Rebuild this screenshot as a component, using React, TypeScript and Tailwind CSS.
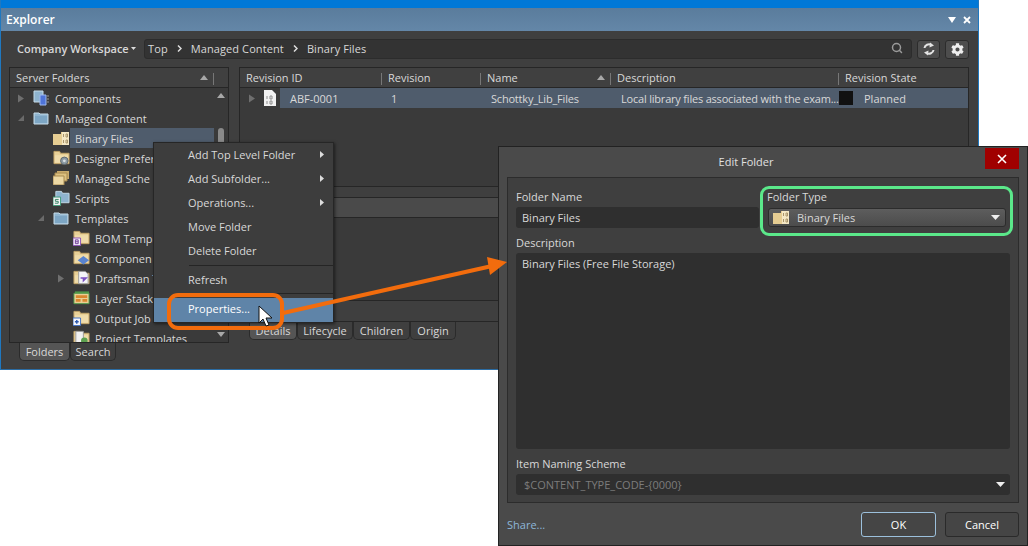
import { Search } from "lucide-react";
import { FaCog } from "react-icons/fa";
import type { ReactNode } from "react";

const Caret = ({ open }: { open?: boolean }) =>
  open ? (
    <svg width="8" height="8" viewBox="0 0 8 8">
      <path d="M7 1v6H1z" fill="#6a6a6a" />
    </svg>
  ) : (
    <svg width="8" height="9" viewBox="0 0 8 9">
      <path d="M1 0.5l6 4-6 4z" fill="#6f6f6f" />
    </svg>
  );

const SortUp = () => (
  <svg width="8" height="5" viewBox="0 0 8 5">
    <path d="M4 0l4 5H0z" fill="#a8a8a8" />
  </svg>
);

const BlueFolder = () => (
  <svg width="16" height="14" viewBox="0 0 16 14">
    <path d="M1 2h5l1 1h8v10H1z" fill="#8fb4cf" stroke="#c5dbe8" strokeWidth="1" />
    <path d="M2 5h12v7H2z" fill="#7da6c4" />
  </svg>
);

const TanFolder = ({ children }: { children?: ReactNode }) => (
  <svg width="18" height="16" viewBox="0 0 18 16">
    <path d="M1 1h6l1 2h9v11H1z" fill="#e9d197" stroke="#c2a468" strokeWidth="1" />
    <path d="M2 5h14v8H2z" fill="#efdcab" />
    {children}
  </svg>
);

const BinaryIcon = () => (
  <svg width="16" height="15" viewBox="0 0 16 15">
    <path d="M0 3h8V1h8v13H0z" fill="#e6cd92" />
    <path d="M9 1h7v13H9z" fill="#f4e7c4" />
    <path d="M10.5 3v3M13 3h1.5v3H13zM10.5 9v3M13 9h1.5v3H13z" fill="none" stroke="#a8946a" strokeWidth="1" />
  </svg>
);

const FileIcon = () => (
  <svg width="12" height="16" viewBox="0 0 12 16">
    <path d="M0 0h8l4 4v12H0z" fill="#f1f1f1" />
    <path d="M3 6v3M6 6h2v3H6zM3 11v3M6 11h2v3H6z" fill="none" stroke="#8d8d8d" strokeWidth="1" />
  </svg>
);

const SyncIcon = () => (
  <svg width="14" height="14" viewBox="0 0 14 14">
    <path d="M2.5 6A4.5 4 0 0 1 9.5 3" fill="none" stroke="#e4e4e4" strokeWidth="2" />
    <path d="M8 0.5L12 3.5 7.5 5.5z" fill="#e4e4e4" />
    <path d="M11.5 8A4.5 4 0 0 1 4.5 11" fill="none" stroke="#e4e4e4" strokeWidth="2" />
    <path d="M6 13.5L2 10.5 6.5 8.5z" fill="#e4e4e4" />
  </svg>
);

const rowIcons: Record<string, ReactNode> = {
  Components: (
    <svg width="16" height="16" viewBox="0 0 16 16">
      <path d="M1 1h9v11H1z" fill="#8fb4cf" stroke="#c5dbe8" />
      <path d="M7 5h6v10H7z" fill="#4f74d8" stroke="#9db8ee" />
      <path d="M14 6h2M14 9h2M14 12h2" stroke="#9a9a9a" />
    </svg>
  ),
  "Managed Content": <BlueFolder />,
  Templates: <BlueFolder />,
  "Binary Files": <BinaryIcon />,
  "Designer Prefer": (
    <TanFolder>
      <circle cx="12" cy="11" r="4" fill="#8c9aa3" stroke="#5d666c" />
      <circle cx="12" cy="11" r="1.5" fill="#d6dde0" />
    </TanFolder>
  ),
  "Managed Sche": (
    <svg width="16" height="14" viewBox="0 0 16 14">
      <path d="M4 0h12v8H4z" fill="#c9ab6d" />
      <path d="M2 2h12v8H2z" fill="#dcc080" stroke="#a88a50" />
      <path d="M0 5h11v9H0z" fill="#ecd8a4" stroke="#a88a50" />
    </svg>
  ),
  Scripts: (
    <svg width="18" height="16" viewBox="0 0 18 16">
      <path d="M3 1h6l1 2h7v10H3z" fill="#8fb4cf" stroke="#c5dbe8" />
      <path d="M0 7h8v9H0z" fill="#f4f4f4" stroke="#3d9a78" />
      <path d="M6 9.5H2.5v2h3v2H2" fill="none" stroke="#2f7f60" />
    </svg>
  ),
  "BOM Templ": (
    <TanFolder>
      <path d="M0 8h8v8H0z" fill="#f3eef7" stroke="#8a50b5" />
      <path d="M2.5 10h3v4h-3zM2.5 12h3" fill="none" stroke="#6d3a96" />
    </TanFolder>
  ),
  Componen: (
    <TanFolder>
      <path d="M11 6l6 4.5-6 4.5-6-4.5z" fill="#5a84cf" />
    </TanFolder>
  ),
  "Draftsman T": (
    <TanFolder>
      <path d="M6 1h7l3 3v10H6z" fill="#f4f4f8" stroke="#9a9a9a" />
      <path d="M8 8h6l-3 3v-3" fill="none" stroke="#7a4fc0" strokeWidth="1.5" />
    </TanFolder>
  ),
  "Layer Stack": (
    <svg width="18" height="16" viewBox="0 0 18 16">
      <path d="M2 1h15v2H2z" fill="#4f9a4a" />
      <path d="M1 3h16v11H1z" fill="#e8cf95" stroke="#4f9a4a" />
      <path d="M3 5h12v3H3zM3 9h5v3H3zM10 9h5v3h-5z" fill="#d9872f" />
    </svg>
  ),
  "Output Job": (
    <TanFolder>
      <path d="M0 8h8v8H0z" fill="#f4f6fb" stroke="#3f6fc4" />
      <path d="M4 10v4M2 12h4" stroke="#2a58b0" strokeWidth="1.5" />
    </TanFolder>
  ),
  "Project Templates": (
    <TanFolder>
      <path d="M3 1h8v13H3z" fill="#f1f1f1" stroke="#9a9a9a" />
      <circle cx="12" cy="11" r="3.5" fill="#5da04f" />
    </TanFolder>
  ),
};

// labels are as far as they show left of the open context menu
const treeRows: { label: string; indent: number; caret?: string; selected?: boolean }[] = [
  { label: "Components", indent: 0, caret: "closed" },
  { label: "Managed Content", indent: 0, caret: "open" },
  { label: "Binary Files", indent: 1, selected: true },
  { label: "Designer Prefer", indent: 1 },
  { label: "Managed Sche", indent: 1 },
  { label: "Scripts", indent: 1 },
  { label: "Templates", indent: 1, caret: "open" },
  { label: "BOM Templ", indent: 2 },
  { label: "Componen", indent: 2 },
  { label: "Draftsman T", indent: 2, caret: "closed" },
  { label: "Layer Stack", indent: 2 },
  { label: "Output Job", indent: 2 },
  { label: "Project Templates", indent: 2 },
];

const menuItems = [
  { label: "Add Top Level Folder", arrow: true },
  { label: "Add Subfolder...", arrow: true },
  { label: "Operations...", arrow: true },
  { label: "Move Folder" },
  { label: "Delete Folder" },
];

function TreeRow({ row }: { row: (typeof treeRows)[number] }) {
  return (
    <div
      className="flex h-5 items-center whitespace-nowrap"
      style={{ paddingLeft: 7 + row.indent * 20 }}
    >
      <span className="flex w-[16px] shrink-0 items-center">
        {row.caret && <Caret open={row.caret === "open"} />}
      </span>
      <span className="flex w-[17px] shrink-0 items-center">{rowIcons[row.label]}</span>
      <span className={`flex h-5 flex-1 items-center pl-[5px] ${row.selected ? "bg-[#4f5c6c]" : ""}`}>
        {row.label}
      </span>
    </div>
  );
}

function ColHead({ label, width, sort }: { label: string; width: number; sort?: boolean }) {
  return (
    <div className="relative flex h-full shrink-0 items-center pl-[6px]" style={{ width }}>
      {label}
      {sort && (
        <span className="ml-auto mr-[6px]">
          <SortUp />
        </span>
      )}
      <span className="absolute right-0 top-[5px] h-[12px] w-px bg-[#777]" />
    </div>
  );
}

function Tab({ label, active, width }: { label: string; active?: boolean; width: number }) {
  return (
    <div
      className={`flex h-[18px] items-center justify-center rounded-b-[5px] border border-t-0 border-[#2b2b2b] ${
        active ? "bg-[#555]" : "bg-[#3f3f3f]"
      }`}
      style={{ width }}
    >
      {label}
    </div>
  );
}

const Chevron = () => (
  <svg width="5" height="7" viewBox="0 0 5 7">
    <path d="M1 0.5l3 3-3 3" fill="none" stroke="#ddd" strokeWidth="1.5" />
  </svg>
);

const DropArrow = () => (
  <svg className="ml-auto" width="9" height="5" viewBox="0 0 9 5">
    <path d="M0 0h9L4.5 5z" fill="#eee" />
  </svg>
);

function Explorer() {
  return (
    <div className="absolute left-0 top-0 flex h-[370px] w-[979px] flex-col border-x border-b border-x-[#1f78c0] border-b-[#2b6ca3] bg-[#3f3f3f]">
      <div className="h-2 shrink-0 bg-[#0078d7]" />
      <div className="flex h-[23px] shrink-0 items-center justify-between bg-gradient-to-b from-[#5a7c9c] to-[#6487a8] pl-[5px] pr-[7px] text-[12px] font-semibold text-white">
        Explorer
        <span className="flex items-center gap-[7px]">
          <svg width="8" height="6" viewBox="0 0 8 6">
            <path d="M0 0h8L4 6z" fill="#fff" />
          </svg>
          <svg width="8" height="8" viewBox="0 0 8 8">
            <path d="M1 1l6 6M7 1L1 7" stroke="#fff" strokeWidth="1.8" />
          </svg>
        </span>
      </div>

      <div className="mt-[8px] flex h-5 shrink-0 items-center pl-[16px] pr-[9px]">
        <span className="w-[110px] pb-[2px] font-semibold whitespace-nowrap">Company Workspace</span>
        <svg className="ml-[4px] mt-[-2px]" width="5" height="3" viewBox="0 0 5 3">
          <path d="M0 0h5L2.5 3z" fill="#ddd" />
        </svg>
        <div className="ml-[8px] flex h-5 flex-1 items-center gap-[9px] rounded-[3px] border border-[#2c2c2c] bg-[#333] pb-[2px] pl-[3px] pr-[8px] tracking-[0.1px]">
          <span>Top</span>
          <Chevron />
          <span>Managed Content</span>
          <Chevron />
          <span>Binary Files</span>
          <Search className="ml-auto text-[#9a9a9a]" size={12} strokeWidth={3} />
        </div>
        <button className="ml-[5px] flex h-[19px] w-[23px] items-center justify-center rounded-[3px] border border-[#2c2c2c] bg-[#4d4d4d]">
          <SyncIcon />
        </button>
        <button className="ml-[5px] flex h-[19px] w-[24px] items-center justify-center rounded-[3px] border border-[#2c2c2c] bg-[#4d4d4d] text-[#eee]">
          <FaCog size={13} />
        </button>
      </div>

      <div className="mt-[8px] flex flex-1 pl-[8px] pr-[9px]">
        <div className="flex w-[220px] shrink-0 flex-col">
          <div className="h-[276px] overflow-hidden border border-[#262626] bg-[#3a3a3a]">
            <div className="flex h-[20px] items-center border-b border-[#262626] bg-[#404040]">
              <ColHead label="Server Folders" width={204} sort />
            </div>
            <div className="relative h-[255px] overflow-hidden">
              {treeRows.map((row) => (
                <TreeRow key={row.label} row={row} />
              ))}
              <div className="absolute bottom-0 right-0 top-0 flex w-[14px] flex-col items-center bg-[#3a3a3a] pt-[5px]">
                <SortUp />
                <div className="mt-[30px] h-[20px] w-[6px] rounded-[3px] bg-[#8a8a8a]" />
                <div className="mt-auto mb-[6px] rotate-180">
                  <SortUp />
                </div>
              </div>
            </div>
          </div>
          <div className="ml-[10px] flex">
            <Tab label="Folders" width={51} active />
            <Tab label="Search" width={46} />
          </div>
        </div>

        <div className="ml-[10px] flex flex-1 flex-col">
          <div className="h-[120px] shrink-0 border border-[#262626] bg-[#3a3a3a]">
            <div className="flex h-[20px] items-center border-b border-[#262626] bg-[#404040]">
              <ColHead label="Revision ID" width={142} />
              <ColHead label="Revision" width={99} />
              <ColHead label="Name" width={130} sort />
              <ColHead label="Description" width={228} />
              <div className="pl-[6px]">Revision State</div>
            </div>
            <div className="flex h-5 items-center whitespace-nowrap">
              <span className="flex w-[24px] justify-center pr-[1px]">
                <Caret />
              </span>
              <FileIcon />
              <div className="ml-[4px] flex h-5 flex-1 items-center bg-[#4f5c6c]">
                <span className="w-[102px] pl-[10px]">ABF-0001</span>
                <span className="w-[98px] pl-[9px]">1</span>
                <span className="w-[130px] pl-[11px] tracking-[-0.2px]">Schottky_Lib_Files</span>
                <span className="w-[229px] pl-[11px] tracking-[-0.2px]">Local library files associated with the exam...</span>
                <span className="h-[14px] w-[14px] bg-[#111]" />
                <span className="pl-[11px]">Planned</span>
              </div>
            </div>
          </div>
          <div className="flex h-[135px] shrink-0 flex-col border-x border-b border-[#262626]">
            <div className="h-[11px] shrink-0 border-b border-[#262626]" />
            <div className="h-[20px] shrink-0 border-b border-[#262626] bg-[#4a4a4a]" />
            <div className="flex-1 border-b border-[#262626] bg-[#3a3a3a]" />
            <div className="h-[20px] shrink-0" />
          </div>
          <div className="ml-[10px] flex">
            <Tab label="Details" width={48} active />
            <Tab label="Lifecycle" width={56} />
            <Tab label="Children" width={57} />
            <Tab label="Origin" width={46} />
          </div>
        </div>
      </div>
    </div>
  );
}

function ContextMenu() {
  return (
    <div className="absolute left-[153px] top-[142px] w-[181px] border border-[#262626] bg-[#3d3d3d] shadow-[1px_1px_3px_rgba(0,0,0,0.5)]">
      {menuItems.map((item) => (
        <div key={item.label} className="flex h-[24px] items-center pb-[2px] pl-[34px] pr-[9px]">
          {item.label}
          {item.arrow && (
            <svg className="ml-auto" width="4" height="7" viewBox="0 0 4 7">
              <path d="M0 0l4 3.5L0 7z" fill="#ddd" />
            </svg>
          )}
        </div>
      ))}
      <div className="ml-[35px] mt-[2px] h-px bg-[#252525]" />
      <div className="flex h-[27px] items-center pl-[34px]">Refresh</div>
      <div className="ml-[35px] h-px bg-[#252525]" />
      <div className="mt-[4px] flex h-[24px] items-center bg-[#5f84a8] pb-[4px] pl-[34px] text-white">Properties...</div>
    </div>
  );
}

function EditFolder() {
  return (
    <div className="absolute left-[498px] top-[146px] flex h-[400px] w-[530px] flex-col border border-[#222] bg-[#4a4a4a]">
      <div className="relative flex h-[30px] shrink-0 items-center justify-center pb-[1px] pr-[34px] text-[#e0e0e0]">
        Edit Folder
        <div className="absolute right-[8px] top-[1px] flex h-[21px] w-[34px] items-center justify-center bg-[#a00000]">
          <svg width="10" height="10" viewBox="0 0 10 10">
            <path d="M1 1l8 8M9 1L1 9" stroke="#fff" strokeWidth="1.6" />
          </svg>
        </div>
      </div>
      <div className="mx-[8px] flex h-[326px] shrink-0 flex-col border border-[#2c2c2c] bg-[#3f3f3f] px-[8px] pt-[11px]">
        <div className="flex gap-[8px]">
          <div className="w-[243px]">
            <div className="mb-[3px] h-[15px] leading-[15px]">Folder Name</div>
            <div className="flex h-[21px] items-center rounded-[3px] bg-[#2f2f2f] pl-[6px]">Binary Files</div>
          </div>
          <div className="w-[239px]">
            <div className="mb-[4px] h-[15px] leading-[15px]">Folder Type</div>
            <div className="ml-[1px] flex h-[19px] items-center rounded-[3px] border border-[#2c2c2c] bg-gradient-to-b from-[#5d5d5d] to-[#4c4c4c] pl-[4px] pr-[5px]">
              <BinaryIcon />
              <span className="ml-[8px]">Binary Files</span>
              <DropArrow />
            </div>
          </div>
        </div>
        <div className="mt-[7px] h-[15px] leading-[15px]">Description</div>
        <div className="mt-[3px] h-[196px] rounded-[3px] bg-[#2f2f2f] pl-[6px] pt-[5px]">Binary Files (Free File Storage)</div>
        <div className="mt-[7px] h-[15px] leading-[15px]">Item Naming Scheme</div>
        <div className="mt-[3px] flex h-[21px] items-center rounded-[3px] bg-[#2f2f2f] pl-[8px] pr-[5px] text-[#7c7c7c]">
          $CONTENT_TYPE_CODE-{"{0000}"}
          <DropArrow />
        </div>
      </div>
      <div className="flex flex-1 items-center pl-[8px] pr-[8px] pt-[1px]">
        <span className="text-[#8db6d8]">Share...</span>
        <button className="ml-auto h-[25px] w-[75px] rounded-[3px] border border-[#9cc0dc] bg-[#454545] text-white">OK</button>
        <button className="ml-[9px] h-[25px] w-[74px] rounded-[3px] border border-[#2a2a2a] bg-[#454545] text-white">Cancel</button>
      </div>
    </div>
  );
}

export default function App() {
  return (
    <div
      className="relative h-[546px] w-[1028px] overflow-hidden bg-white text-[11px] leading-none text-[#d8d8d8]"
      style={{ fontFamily: '"Open Sans", "Noto Sans", sans-serif' }}
    >
      <Explorer />
      <ContextMenu />
      <EditFolder />

      {/* callouts */}
      <div className="absolute left-[167px] top-[293px] h-[37px] w-[117px] rounded-[11px] border-[4px] border-[#f26c0d]" />
      <div className="absolute left-[760px] top-[186px] h-[50px] w-[253px] rounded-[9px] border-[3px] border-[#5be88a]" />
      <svg className="pointer-events-none absolute left-0 top-0" width="1028" height="546" viewBox="0 0 1028 546">
        <path d="M283 313L492 266" stroke="#f26c0d" strokeWidth="4" fill="none" />
        <path d="M487 257L507 262 490 275z" fill="#f26c0d" />
        <path d="M259 306v17l4-4 3 7 3-1-3-7h6z" fill="#fff" stroke="#111" strokeWidth="1" />
      </svg>
    </div>
  );
}
